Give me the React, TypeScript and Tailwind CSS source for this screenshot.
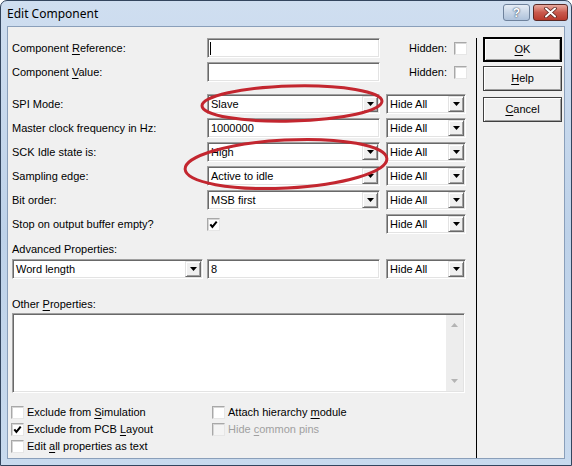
import React from "react";

const sunken =
  "border border-t-[#a0a0a0] border-l-[#a0a0a0] border-b-white border-r-white shadow-[inset_1px_1px_0_#696969,inset_-1px_-1px_0_#e3e3e3]";
const raised =
  "bg-[#f0f0f0] border border-t-[#e3e3e3] border-l-[#e3e3e3] border-b-[#696969] border-r-[#696969] shadow-[inset_1px_1px_0_#ffffff,inset_-1px_-1px_0_#a0a0a0]";

function Tri({ color = "#000" }: { color?: string }) {
  return (
    <svg width="7" height="4" viewBox="0 0 7 4">
      <path d="M0 0H7L3.5 4Z" fill={color} />
    </svg>
  );
}

function Select({ value, className }: { value: string; className: string }) {
  return (
    <div className={`h-[20px] bg-white flex items-center ${sunken} ${className}`}>
      <span className="flex-1 pl-[3px] whitespace-nowrap overflow-hidden">{value}</span>
      <div className={`w-[16px] h-[16px] mr-[1px] flex items-center justify-center ${raised}`}>
        <Tri />
      </div>
    </div>
  );
}

function Input({ value, className, caret }: { value?: string; className: string; caret?: boolean }) {
  return (
    <div className={`h-[20px] bg-white flex items-center ${sunken} ${className}`}>
      {caret && <div className="ml-[2px] w-[1px] h-[13px] bg-black" />}
      {value && <span className="pl-[3px] whitespace-nowrap">{value}</span>}
    </div>
  );
}

function Box({ checked, disabled }: { checked?: boolean; disabled?: boolean }) {
  return (
    <div
      className={`w-[13px] h-[13px] shrink-0 flex items-center justify-center ${
        disabled ? "bg-[#f4f4f4]" : "bg-white"
      } border border-t-[#a8a8a8] border-l-[#a8a8a8] border-b-[#e6e6e6] border-r-[#e6e6e6] shadow-[inset_1px_1px_0_#d6d6d6]`}
    >
      {checked && (
        <svg width="9" height="9" viewBox="0 0 9 9">
          <path d="M1.3 4.3L3.4 6.9L7.7 1.6" fill="none" stroke="#000" strokeWidth="2" />
        </svg>
      )}
    </div>
  );
}

function Btn({ children, def }: { children: React.ReactNode; def?: boolean }) {
  return (
    <div
      className={`w-[79px] h-[25px] flex items-center justify-center bg-[#f0f0f0] ${
        def ? "border-2 border-black" : "border border-[#404040]"
      } shadow-[inset_1px_1px_0_#ffffff,inset_-1px_-1px_0_#a0a0a0]`}
    >
      {children}
    </div>
  );
}

const U = ({ children }: { children: React.ReactNode }) => (
  <span className="underline underline-offset-[2px]">{children}</span>
);

function PropRow({
  label,
  field,
}: {
  label: React.ReactNode;
  field: React.ReactNode;
}) {
  return (
    <div className="h-[20px] flex items-center">
      <div className="w-[195px] whitespace-nowrap">{label}</div>
      {field}
      <Select value="Hide All" className="ml-[6px] w-[80px]" />
    </div>
  );
}

export default function App() {
  return (
    <div className="font-['Liberation_Sans',Arial,sans-serif] text-[11px] text-black">
      <div className="relative w-[572px] h-[466px] flex flex-col rounded-t-[7px] border border-[#33455e] bg-gradient-to-b from-[#cfdef0] via-[#bed2e9] to-[#c8daee]">
        {/* Title bar */}
        <div className="h-[25px] flex items-start pl-[6px] pr-[3px]">
          <span className="mt-[5px] font-['Noto_Sans',sans-serif] text-[12px] leading-[16px] text-black">
            Edit Component
          </span>
          <div className="ml-auto mt-[3px] flex gap-[3px]">
            <div className="w-[27px] h-[17px] rounded-[3px] border border-[#6f829c] bg-gradient-to-b from-[#e6edf6] via-[#c9d6e7] to-[#aec2db] flex items-center justify-center">
              <span className="font-bold text-[12px] leading-none text-white [text-shadow:0_0_2px_#3a4d68,0_0_1px_#3a4d68]">
                ?
              </span>
            </div>
            <div className="w-[35px] h-[17px] rounded-[3px] border border-[#5a2a26] bg-gradient-to-b from-[#e8a99f] via-[#c9594d] to-[#b8392c] flex items-center justify-center">
              <svg width="13" height="11" viewBox="0 0 13 11">
                <path d="M2 1.5L11 9.5M11 1.5L2 9.5" stroke="#5a2622" strokeWidth="3.6" strokeLinecap="round" />
                <path d="M2 1.5L11 9.5M11 1.5L2 9.5" stroke="#ffffff" strokeWidth="2" strokeLinecap="round" />
              </svg>
            </div>
          </div>
        </div>

        {/* Client area */}
        <div className="flex-1 mx-[6px] mb-[6px] border border-[#8a9fba] bg-[#f0f0f0] flex">
          {/* Left panel */}
          <div className="w-[468px] pl-[4px] pt-[11px] flex flex-col">
            <div className="h-[20px] flex items-center">
              <div className="w-[195px] whitespace-nowrap">
                Component <U>R</U>eference:
              </div>
              <Input className="w-[173px]" caret />
              <div className="w-[87px] flex items-center justify-end gap-[7px]">
                <span>Hidden:</span>
                <Box />
              </div>
            </div>
            <div className="mt-[4px] h-[20px] flex items-center">
              <div className="w-[195px] whitespace-nowrap">
                Component <U>V</U>alue:
              </div>
              <Input className="w-[173px]" />
              <div className="w-[87px] flex items-center justify-end gap-[7px]">
                <span>Hidden:</span>
                <Box />
              </div>
            </div>

            <div className="mt-[12px] flex flex-col gap-[4px]">
              <PropRow label="SPI Mode:" field={<Select value="Slave" className="w-[173px]" />} />
              <PropRow label="Master clock frequency in Hz:" field={<Input value="1000000" className="w-[173px]" />} />
              <PropRow label="SCK Idle state is:" field={<Select value="High" className="w-[173px]" />} />
              <PropRow label="Sampling edge:" field={<Select value="Active to idle" className="w-[173px]" />} />
              <PropRow label="Bit order:" field={<Select value="MSB first" className="w-[173px]" />} />
              <PropRow
                label="Stop on output buffer empty?"
                field={
                  <div className="w-[173px] flex items-center">
                    <Box checked />
                  </div>
                }
              />
            </div>

            <div className="mt-[9px] h-[13px] leading-[13px]">Advanced Properties:</div>
            <div className="mt-[3px] h-[20px] flex items-center">
              <Select value="Word length" className="w-[191px]" />
              <Input value="8" className="ml-[4px] w-[173px]" />
              <Select value="Hide All" className="ml-[6px] w-[80px]" />
            </div>

            <div className="mt-[19px] h-[13px] leading-[13px]">
              Other <U>P</U>roperties:
            </div>
            <div className={`mt-[2px] w-[453px] h-[80px] bg-white flex justify-end ${sunken}`}>
              <div className="w-[17px] my-[1px] mr-[1px] bg-[#ededed] flex flex-col items-center justify-between py-[8px]">
                <svg width="7" height="4" viewBox="0 0 7 4">
                  <path d="M0 4H7L3.5 0Z" fill="#b4b4b4" />
                </svg>
                <Tri color="#b4b4b4" />
              </div>
            </div>

            <div className="mt-[11px] -ml-[1px] flex flex-col">
              <div className="h-[17px] flex items-center">
                <div className="w-[201px] flex items-center gap-[3px]">
                  <Box />
                  <span>
                    Exclude from <U>S</U>imulation
                  </span>
                </div>
                <div className="flex items-center gap-[3px]">
                  <Box />
                  <span>
                    Attach hierarchy <U>m</U>odule
                  </span>
                </div>
              </div>
              <div className="h-[17px] flex items-center">
                <div className="w-[201px] flex items-center gap-[3px]">
                  <Box checked />
                  <span>
                    Exclude from PCB <U>L</U>ayout
                  </span>
                </div>
                <div className="flex items-center gap-[3px] text-[#a0a0a0]">
                  <Box disabled />
                  <span>
                    Hide <U>c</U>ommon pins
                  </span>
                </div>
              </div>
              <div className="h-[17px] flex items-center">
                <div className="w-[201px] flex items-center gap-[3px]">
                  <Box />
                  <span>
                    Edit <U>a</U>ll properties as text
                  </span>
                </div>
              </div>
            </div>
          </div>

          {/* Separator */}
          <div className="w-[1px] bg-black mt-[11px]" />

          {/* Buttons */}
          <div className="pl-[6px] pt-[10px] flex flex-col">
            <Btn def>
              <U>O</U>K
            </Btn>
            <div className="mt-[4px]">
              <Btn>
                <U>H</U>elp
              </Btn>
            </div>
            <div className="mt-[6px]">
              <Btn>
                <U>C</U>ancel
              </Btn>
            </div>
          </div>
        </div>

        {/* Red annotation ellipses */}
        <svg
          className="absolute -left-px -top-px pointer-events-none"
          width="572"
          height="466"
          viewBox="0 0 572 466"
        >
          <ellipse
            cx="292"
            cy="103.5"
            rx="90"
            ry="17.5"
            transform="rotate(-1.5 292 103.5)"
            fill="none"
            stroke="#c3262f"
            strokeWidth="3"
          />
          <ellipse
            cx="286"
            cy="164"
            rx="101"
            ry="24"
            transform="rotate(-3 286 164)"
            fill="none"
            stroke="#c3262f"
            strokeWidth="3"
          />
        </svg>
      </div>
    </div>
  );
}
